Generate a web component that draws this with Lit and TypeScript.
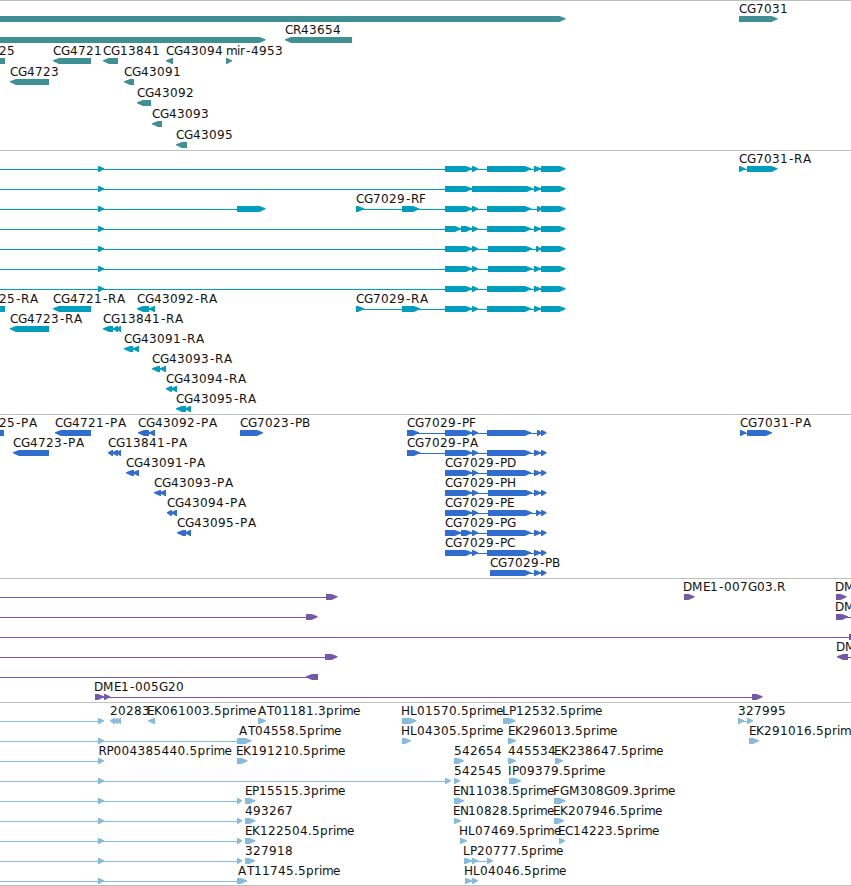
import { LitElement, css, html, svg } from 'lit';
import { customElement, property } from 'lit/decorators.js';

type Span = [number, number];

interface Feature {
  label: string;
  spans: Span[];
  reverse: boolean;
  labelX: number;
}

interface TrackData {
  name: string;
  color: string;
  rowHeight: number;
  padBottom: number;
  rows: Feature[][];
}

const ADVANCE: Record<string, number> = {
  A: 9, C: 8, D: 9, E: 7, F: 7, G: 9, H: 9, I: 4, K: 8, L: 7, M: 11, P: 7, R: 8, T: 7, B: 8,
  p: 8, r: 5, i: 3, m: 11, e: 7, '.': 4, '-': 6,
};

const fwd = (label: string, spans: Span[], labelX = spans[0][0]): Feature =>
  ({ label, spans, reverse: false, labelX });
const rev = (label: string, spans: Span[], labelX = spans[0][0]): Feature =>
  ({ label, spans, reverse: true, labelX });

// spans that come back in several transcripts
const OFF: Span = [-40, -20];
const START: Span = [98, 104];
const MID: Span = [237, 242];
const E1: Span = [445, 472];
const E1A: Span = [445, 461];
const E1B: Span = [461, 472];
const E2: Span = [472, 478];
const E3: Span = [487, 531];
const E3S: Span = [488, 532];
const E4: Span = [534, 541];
const E5: Span = [541, 565.5];
const P5: Span = [541, 546.5];

const TRACKS: TrackData[] = [
  {
    name: 'genes',
    color: '#3f8f95',
    rowHeight: 21,
    padBottom: 2,
    rows: [
      [fwd('', [[-9, 565.5]]), fwd('CG7031', [[739, 777.5]])],
      [fwd('', [[-9, 265.5]]), rev('CR43654', [[285, 352]])],
      [
        rev('25', [[-30, 5]], -1),
        rev('CG4721', [[53, 91]]),
        rev('CG13841', [[103, 118]]),
        rev('CG43094', [[166, 173]]),
        fwd('mir-4953', [[226, 232]]),
      ],
      [rev('CG4723', [[10, 49]]), rev('CG43091', [[124, 134]])],
      [rev('CG43092', [[137, 151]])],
      [rev('CG43093', [[152, 162]])],
      [rev('CG43095', [[176, 187]])],
    ],
  },
  {
    name: 'transcripts',
    color: '#009dbf',
    rowHeight: 20,
    padBottom: 3,
    rows: [
      [fwd('', [OFF, START, E1, E2, E3, E4, E5]), fwd('CG7031-RA', [[739, 745], [747, 777.5]])],
      [fwd('', [OFF, START, E1, [472, 533], E4, E5])],
      [
        fwd('', [OFF, START, [237, 265.5]]),
        fwd('CG7029-RF', [[356, 364], [402, 419], E1, E2, E3, [537, 542], E5]),
      ],
      [fwd('', [OFF, START, E1A, E1B, E2, E3, E4, E5])],
      [fwd('', [OFF, START, E1, E2, E3S, [536, 541], E5])],
      [fwd('', [OFF, START, E1, E2, E3S, E4, E5])],
      [fwd('', [OFF, START, E1, E2, E3, E4, E5])],
      [
        rev('25-RA', [[-30, 5]], -1),
        rev('CG4721-RA', [[53, 91]]),
        rev('CG43092-RA', [[137, 149], [149, 155]]),
        fwd('CG7029-RA', [[356, 364], [402, 420], E1, E2, E3, E4, E5]),
      ],
      [rev('CG4723-RA', [[10, 49]]), rev('CG13841-RA', [[103, 113], [113, 118], [117, 121]])],
      [rev('CG43091-RA', [[124, 133], [133, 139]])],
      [rev('CG43093-RA', [[152, 160], [160, 166]])],
      [rev('CG43094-RA', [[166, 172], [171, 177]])],
      [rev('CG43095-RA', [[176, 186], [185, 191]])],
    ],
  },
  {
    name: 'proteins',
    color: '#306dce',
    rowHeight: 20,
    padBottom: 3,
    rows: [
      [
        rev('25-PA', [[-30, 4]], -1),
        rev('CG4721-PA', [[55, 91]]),
        rev('CG43092-PA', [[138, 149], [149, 155]]),
        fwd('CG7023-PB', [[240, 263]]),
        fwd('CG7029-PF', [[407, 419], E1, E2, E3, [537, 542], P5]),
        fwd('CG7031-PA', [[740, 746], [747, 772]]),
      ],
      [
        rev('CG4723-PA', [[13, 49]]),
        rev('CG13841-PA', [[108, 113], [112, 118], [117, 121]]),
        fwd('CG7029-PA', [[407, 420], E1, E2, E3, E4, P5]),
      ],
      [rev('CG43091-PA', [[126, 134], [133, 139]]), fwd('CG7029-PD', [E1, E2, E3, E4, P5])],
      [rev('CG43093-PA', [[154, 161], [160, 166]]), fwd('CG7029-PH', [E1, E2, E3S, E4, P5])],
      [rev('CG43094-PA', [[167, 172], [171, 177]]), fwd('CG7029-PE', [E1, E2, E3S, [536, 541], P5])],
      [rev('CG43095-PA', [[177, 186], [185, 191]]), fwd('CG7029-PG', [E1A, E1B, E2, E3, E4, P5])],
      [fwd('CG7029-PC', [E1, E2, E3, E4, P5])],
      [fwd('CG7029-PB', [[490, 531], E4, P5])],
    ],
  },
  {
    name: 'bacs',
    color: '#7558a7',
    rowHeight: 20,
    padBottom: 3,
    rows: [
      [fwd('', [OFF, [326, 337.5]]), fwd('DME1-007G03.R', [[684, 694.5]]), fwd('DM', [[836, 846.5]])],
      [fwd('', [OFF, [306, 317.5]]), fwd('DM', [[836, 848], [880, 890]])],
      [fwd('', [OFF, [849, 890]])],
      [fwd('', [OFF, [325, 337.5]]), rev('DM', [[837, 848], [880, 890]])],
      [rev('', [OFF, [306, 318]])],
      [fwd('DME1-005G20', [[95, 104], [104, 110], [752, 762.5]])],
    ],
  },
  {
    name: 'ests',
    color: '#87bbdd',
    rowHeight: 20,
    padBottom: 2,
    rows: [
      [
        fwd('', [OFF, START]),
        rev('20283', [[110, 115], [114, 118], [117, 121]]),
        rev('EK061003.5prime', [[148, 155]]),
        fwd('AT01181.3prime', [[258, 266]]),
        fwd('HL01570.5prime', [[402, 416.5]]),
        fwd('LP12532.5prime', [[503, 515.5]]),
        fwd('327995', [[738, 744], [747, 753]]),
      ],
      [
        fwd('AT04558.5prime', [OFF, START, [237, 251.5]], 239),
        fwd('HL04305.5prime', [[402, 411]]),
        fwd('EK296013.5prime', [[508, 516]], 509),
        fwd('EK291016.5prim', [[749, 759]], 750),
      ],
      [
        fwd('RP004385440.5prime', [OFF, START], 99.5),
        fwd('EK191210.5prime', [[237, 247.5]]),
        fwd('542654', [[454, 464]]),
        fwd('445534', [[508, 516]]),
        fwd('EK238647.5prime', [[555, 563]]),
      ],
      [
        fwd('', [OFF, START, [445, 451]]),
        fwd('542545', [[454, 460]]),
        fwd('IP09379.5prime', [[509, 521]]),
      ],
      [
        fwd('', [OFF, START, MID]),
        fwd('EP15515.3prime', [[245, 255.5]], 246),
        fwd('EN11038.5prime', [[454, 464]]),
        fwd('FGM308G09.3prime', [[554, 565.5]]),
      ],
      [
        fwd('', [OFF, START, MID]),
        fwd('493267', [[245, 255.5]]),
        fwd('EN10828.5prime', [[454, 461]]),
        fwd('EK207946.5prime', [[554, 564]]),
      ],
      [
        fwd('', [OFF, START, MID]),
        fwd('EK122504.5prime', [[245, 255.5]], 246),
        fwd('HL07469.5prime', [[460, 467]]),
        fwd('EC14223.5prime', [[559, 565]]),
      ],
      [
        fwd('', [OFF, START, MID]),
        fwd('327918', [[245, 255]]),
        fwd('LP20777.5prime', [[464, 472], [472, 478], [487, 493]]),
      ],
      [
        fwd('AT11745.5prime', [OFF, START, [237, 247]], 238),
        fwd('HL04046.5prime', [[465, 472], [472, 478]]),
      ],
    ],
  },
];

@customElement('genome-track')
export class GenomeTrack extends LitElement {
  static styles = css`
    :host {
      display: block;
      border-top: 1px solid #bebebe;
    }
    .row {
      display: block;
      width: 100%;
      overflow: visible;
    }
    text {
      font-family: 'DejaVu Sans', sans-serif;
      font-size: 12px;
      fill: #111;
    }
  `;

  @property({ attribute: false })
  track!: TrackData;

  render () {
    const { rows, rowHeight, padBottom, color } = this.track;
    return html`
      <div style="padding-bottom: ${padBottom}px">
        ${rows.map((row) => html`
          <svg class="row" height=${rowHeight} fill=${color}>
            ${row.map((feature) => this.renderFeature(feature))}
          </svg>
        `)}
      </div>
    `;
  }

  renderFeature ({ label, spans, reverse, labelX }: Feature) {
    const first = spans[0][0];
    const last = spans[spans.length - 1][1];
    return svg`
      ${spans.length > 1
        ? svg`<rect x=${first + 2} y="18" width=${last - first - 4} height="1"></rect>`
        : ''}
      ${spans.map(([from, to]) => svg`<path d=${this.arrow(from, to, reverse)}></path>`)}
      ${label ? svg`<text x=${this.glyphXs(label, labelX)} y="12">${label}</text>` : ''}
    `;
  }

  // bar with a slightly blunt point on the strand side
  arrow (from: number, to: number, reverse: boolean) {
    const head = Math.min(6, to - from - 1);
    return reverse
      ? `M${to} 15H${from + head}L${from} 17.3V18.3L${from + head} 21H${to}Z`
      : `M${from} 15H${to - head}L${to} 17.3V18.3L${to - head} 21H${from}Z`;
  }

  glyphXs (label: string, x: number) {
    const xs: number[] = [];
    // letters with an upright stem start flush with the bar
    if (/^[DEFHILPR]/.test(label)) {
      x -= 1;
    }
    for (const char of label) {
      if (char === 'A' && xs.length) {
        x += 1;
      }
      // the hyphen sits in the middle of its slot
      xs.push(char === '-' ? x + 1 : x);
      x += ADVANCE[char] ?? 8;
    }
    return xs.join(' ');
  }
}

@customElement('app-root')
export class AppRoot extends LitElement {
  static styles = css`
    :host {
      display: block;
      width: 100%;
      background: #fff;
    }
    .tracks {
      display: flex;
      flex-direction: column;
      overflow: hidden;
      border-bottom: 1px solid #bebebe;
    }
  `;

  render () {
    return html`
      <div class="tracks">
        ${TRACKS.map((track) => html`<genome-track .track=${track}></genome-track>`)}
      </div>
    `;
  }
}
